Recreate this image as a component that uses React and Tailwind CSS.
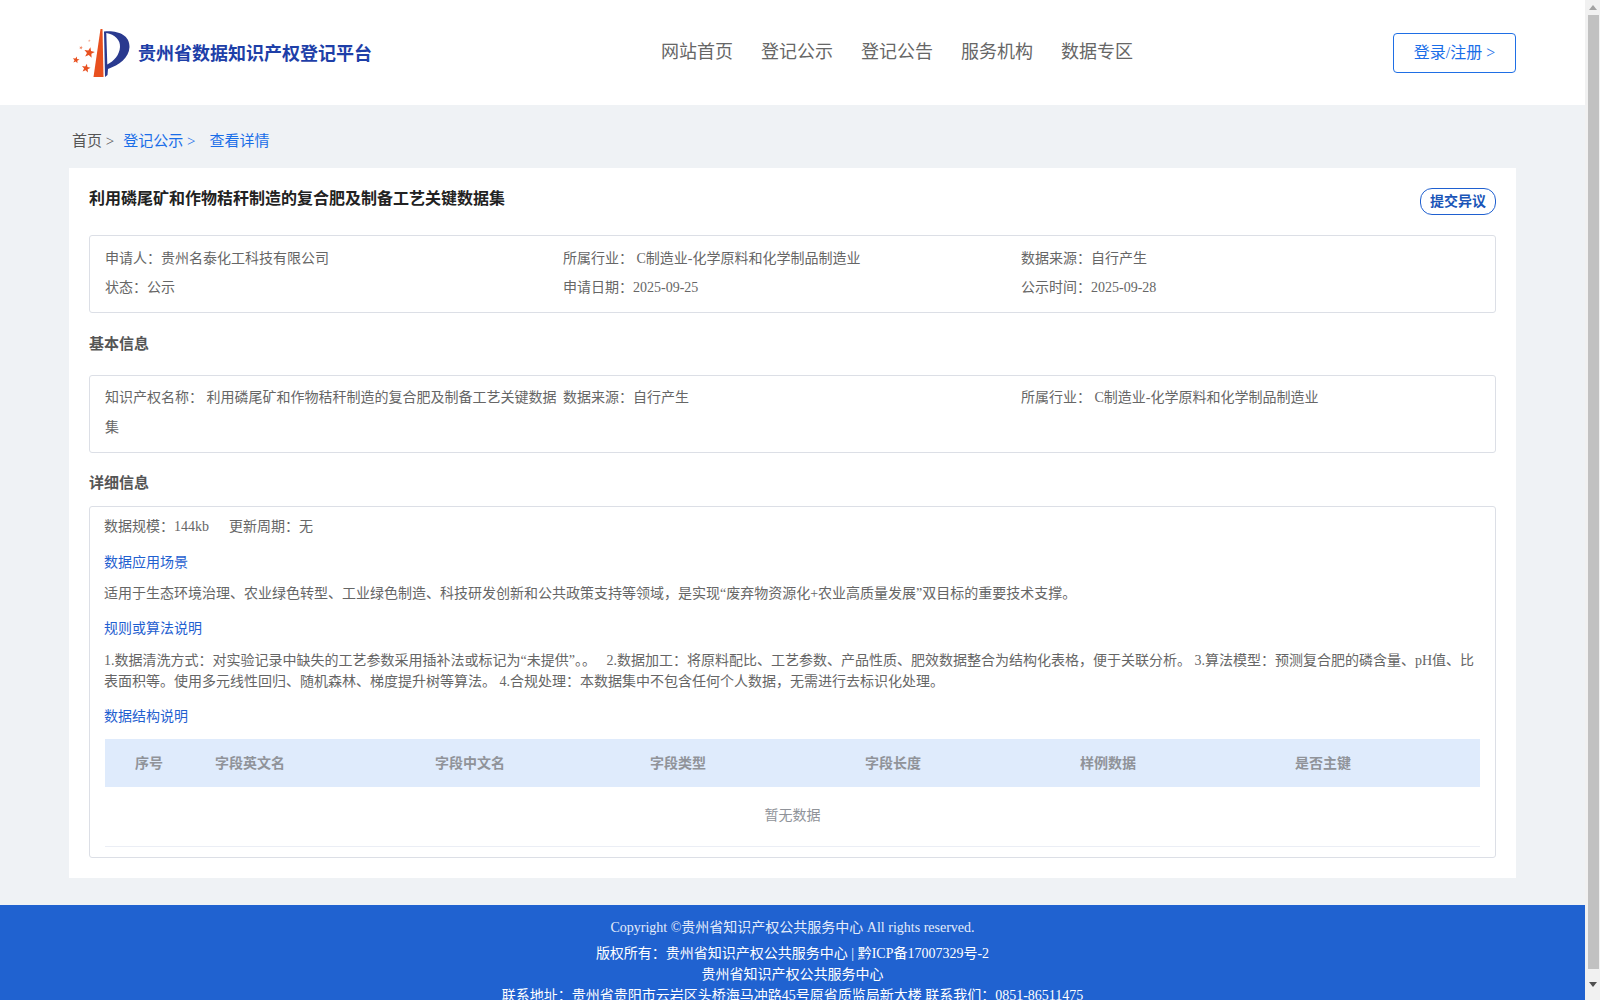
const navItems = ['网站首页', '登记公示', '登记公告', '服务机构', '数据专区'];

const tableHead = [
  { label: '序号', className: 'w-[110px] pl-[30px]' },
  { label: '字段英文名', className: 'w-[220px]' },
  { label: '字段中文名', className: 'w-[215px]' },
  { label: '字段类型', className: 'w-[215px]' },
  { label: '字段长度', className: 'w-[215px]' },
  { label: '样例数据', className: 'w-[215px]' },
  { label: '是否主键', className: 'w-[185px]' },
];

const Star = ({ cx, cy, r, opacity = 1 }) => {
  const points = [];
  for (let i = 0; i < 10; i++) {
    const radius = i % 2 === 0 ? r : r * 0.42;
    const angle = (Math.PI / 5) * i - Math.PI / 2 + 0.2;
    points.push(`${cx + radius * Math.cos(angle)},${cy + radius * Math.sin(angle)}`);
  }
  return <polygon points={points.join(' ')} fill="#e8501f" opacity={opacity} />;
};

const Logo = () => (
  <svg width="62" height="56" viewBox="0 0 62 56" className="shrink-0">
    <Star cx={19.3} cy={27.7} r={5.6} />
    <Star cx={16} cy={43.3} r={4.6} />
    <Star cx={6} cy={35} r={3.6} />
    <Star cx={11} cy={22.7} r={2} opacity={0.7} />
    <Star cx={19.3} cy={15.7} r={1.4} opacity={0.5} />
    <polygon points="30.5,4 32.5,4 33.5,52 23.5,52" fill="#e8501f" />
    <path
      fillRule="evenodd"
      d="M34 6.5C46 5 60 9 59.5 22C59 33 49 40 38 44L37.5 50L35 52ZM36.3 8C45 9.5 50.5 15 50 22C49.5 30 44 36 37.3 39.5Z"
      fill="#2a3a8f"
    />
  </svg>
);

const Header = () => (
  <header className="h-[105px] bg-white flex items-center">
    <div className="w-[591px] pl-[70px] flex items-center">
      <Logo />
      <span className="ml-[6px] mt-[3px] text-[18px] font-bold text-[#1e3fa8] whitespace-nowrap">
        贵州省数据知识产权登记平台
      </span>
    </div>
    <nav className="flex gap-[28px] w-[802px] pl-[70px] text-[18px] text-[#666666] -mt-[1px]">
      {navItems.map((item) => (
        <a key={item} className="whitespace-nowrap">
          {item}
        </a>
      ))}
    </nav>
    <button className="w-[123px] h-[40px] border border-[#1f6fe5] rounded-[4px] text-[16px] text-[#1a6ee8] bg-white">
      登录/注册 &gt;
    </button>
  </header>
);

const InfoCell = ({ children, className = 'w-[458px]' }) => (
  <div className={'pr-[6px] leading-[29px] ' + className}>{children}</div>
);

const SubTitle = ({ children, className }) => (
  <div className={'text-[#1f60d0] leading-[22px] ' + className}>{children}</div>
);

const App = () => {
  return (
    <div
      className="flex w-[1600px] h-[1000px] overflow-hidden text-[14px] text-[#666666]"
      style={{ fontFamily: '"Liberation Serif", "Noto Sans CJK SC", serif' }}
    >
      <main className="w-[1585px] bg-[#eff2f5] h-[1000px] overflow-hidden shrink-0">
        <Header />

        {/* breadcrumb */}
        <div className="h-[63px] pl-[72px] pt-[25px] text-[15px] leading-[22px] flex">
          <span className="text-[#555555]">首页 &gt;</span>
          <span className="ml-[9px] text-[#1a6ee8]">登记公示 &gt;</span>
          <span className="ml-[14px] text-[#1a6ee8]">查看详情</span>
        </div>

        {/* card */}
        <section className="ml-[69px] w-[1447px] h-[710px] bg-white px-[20px]">
          <div className="h-[67px] flex justify-between pt-[20px]">
            <h1 className="text-[16px] font-bold text-[#222222] leading-[22px]">
              利用磷尾矿和作物秸秆制造的复合肥及制备工艺关键数据集
            </h1>
            <button className="w-[76px] h-[27px] border border-[#1f60d0] rounded-[12px] text-[14px] font-bold text-[#1a55b8] bg-white">
              提交异议
            </button>
          </div>

          <div className="h-[78px] border border-[#dcdfe6] rounded-[3px] pl-[15px] pt-[8px]">
            <div className="flex">
              <InfoCell>申请人：贵州名泰化工科技有限公司</InfoCell>
              <InfoCell>所属行业： C制造业-化学原料和化学制品制造业</InfoCell>
              <InfoCell>数据来源：自行产生</InfoCell>
            </div>
            <div className="flex">
              <InfoCell>状态：公示</InfoCell>
              <InfoCell>申请日期：2025-09-25</InfoCell>
              <InfoCell>公示时间：2025-09-28</InfoCell>
            </div>
          </div>

          <h2 className="h-[62px] flex items-center text-[15px] font-bold text-[#555555]">基本信息</h2>

          <div className="h-[78px] border border-[#dcdfe6] rounded-[3px] pl-[15px] pt-[7px]">
            <div className="flex leading-[30px]">
              <div className="w-[458px] pr-[6px] leading-[30px]">
                知识产权名称： 利用磷尾矿和作物秸秆制造的复合肥及制备工艺关键数据集
              </div>
              <div className="w-[458px] leading-[30px]">数据来源：自行产生</div>
              <div className="w-[458px] leading-[30px]">所属行业： C制造业-化学原料和化学制品制造业</div>
            </div>
          </div>

          <h2 className="h-[53px] flex items-center pt-[8px] text-[15px] font-bold text-[#555555]">详细信息</h2>

          <div className="h-[352px] border border-[#dcdfe6] rounded-[3px] pl-[14px] pr-[15px]">
            <div className="flex mt-[9px] leading-[22px]">
              <span>数据规模：144kb</span>
              <span className="ml-[20px]">更新周期：无</span>
            </div>
            <SubTitle className="mt-[14px]">数据应用场景</SubTitle>
            <p className="mt-[9px] leading-[22px]">
              适用于生态环境治理、农业绿色转型、工业绿色制造、科技研发创新和公共政策支持等领域，是实现“废弃物资源化+农业高质量发展”双目标的重要技术支撑。
            </p>
            <SubTitle className="mt-[13px]">规则或算法说明</SubTitle>
            <p className="mt-[10px] leading-[21px]">
              1.数据清洗方式：对实验记录中缺失的工艺参数采用插补法或标记为“未提供”。。&ensp; 2.数据加工：将原料配比、工艺参数、产品性质、肥效数据整合为结构化表格，便于关联分析。 3.算法模型：预测复合肥的磷含量、pH值、比表面积等。使用多元线性回归、随机森林、梯度提升树等算法。 4.合规处理：本数据集中不包含任何个人数据，无需进行去标识化处理。
            </p>
            <SubTitle className="mt-[14px]">数据结构说明</SubTitle>

            <div className="mt-[11px] ml-[1px] h-[48px] bg-[#dfebfc] flex items-center font-bold text-[#909399]">
              {tableHead.map((col) => (
                <div key={col.label} className={col.className}>
                  {col.label}
                </div>
              ))}
            </div>
            <div className="h-[60px] ml-[1px] pb-[3px] flex items-center justify-center text-[#909399] border-b border-[#ebeef5]">
              暂无数据
            </div>
          </div>
        </section>

        <footer className="mt-[27px] h-[95px] bg-[#2062d0] text-white text-center pt-[12px]">
          <div className="leading-[22px] text-[#e4ecfa]">Copyright ©贵州省知识产权公共服务中心 All rights reserved.</div>
          <div className="mt-[5px] leading-[20px]">版权所有：贵州省知识产权公共服务中心 | 黔ICP备17007329号-2</div>
          <div className="leading-[21px]">贵州省知识产权公共服务中心</div>
          <div className="leading-[21px] whitespace-nowrap">
            联系地址：贵州省贵阳市云岩区头桥海马冲路45号原省质监局新大楼 联系我们：0851-86511475
          </div>
        </footer>
      </main>

      {/* scrollbar */}
      <div className="w-[15px] h-[1000px] bg-[#f1f1f1] flex flex-col items-center shrink-0">
        <div className="h-[15px] flex items-center justify-center">
          <svg width="8" height="5" viewBox="0 0 8 5"><polygon points="4,0 8,5 0,5" fill="#a3a3a3" /></svg>
        </div>
        <div className="w-[11px] ml-[1px] h-[954px] bg-[#c1c1c1]" />
        <div className="flex-1 flex items-center justify-center">
          <svg width="8" height="5" viewBox="0 0 8 5"><polygon points="0,0 8,0 4,5" fill="#505050" /></svg>
        </div>
      </div>
    </div>
  );
};

export default App;
